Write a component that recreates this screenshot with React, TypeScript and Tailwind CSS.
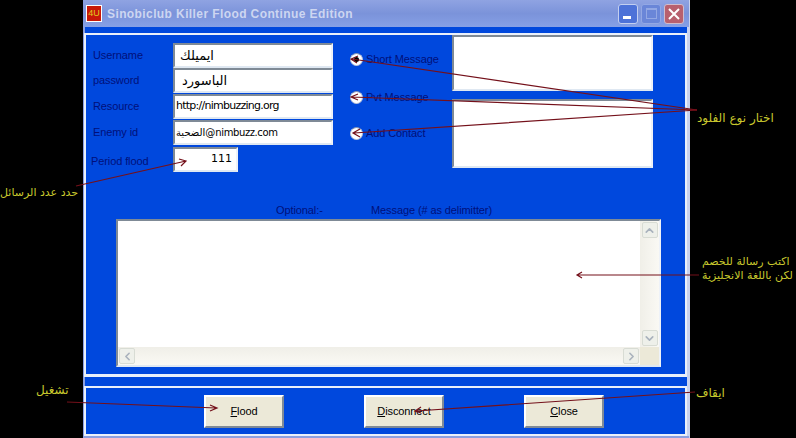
import { ChevronUp, ChevronDown, ChevronLeft, ChevronRight } from "lucide-react";

const sunken = "border-2 border-t-[#7f8a96] border-l-[#7f8a96] border-r-[#eef2f8] border-b-[#dfe8f2] bg-white";
const labelText = "text-[11px] leading-none tracking-[-0.1px] text-[#00107a]";

const Field = ({ label, value, size, className }: { label: string; value: string; size: string; className?: string }) => {
    return <div className={`flex items-center h-[25px] ${className ?? ""}`}>
        <span className={`w-[80px] ${labelText}`}>{label}</span>
        <div className={`w-[160px] h-[25px] flex items-center text-black ${sunken} ${size}`}>{value}</div>
    </div>
}

const Radio = ({ label, checked, className }: { label: string; checked?: boolean; className: string }) => {
    return <div className={`flex items-center ${className}`}>
        <span className="w-[13px] h-[13px] rounded-full bg-white border border-[#b8c2d8] border-t-[#8492b4] flex items-center justify-center">
            {checked && <span className="w-[5px] h-[5px] rounded-full bg-black"></span>}
        </span>
        <span className={`ml-[3px] ${labelText}`}>{label}</span>
    </div>
}

const ScrollButton = ({ children }: { children: React.ReactNode }) => {
    return <div className="w-[16px] h-[16px] bg-[#eef0ea] border border-[#d8dcd4] rounded-[2px] flex items-center justify-center text-[#a9b2bd]">
        {children}
    </div>
}

const ActionButton = ({ first, rest }: { first: string; rest: string }) => {
    return <button className="w-[80px] h-[33px] bg-[#ece9d8] border-2 border-t-white border-l-white border-r-[#7f8a96] border-b-[#7f8a96] text-[11px] tracking-[-0.1px] text-black">
        <span className="underline">{first}</span>{rest}
    </button>
}

const Callout = ({ text, className }: { text: string; className: string }) => {
    return <div dir="rtl" className={`absolute leading-[14px] text-[#c9c92e] whitespace-nowrap font-['DejaVu_Sans',sans-serif] ${className}`}>{text}</div>
}

const Arrows = () => {
    return <svg className="absolute inset-0 pointer-events-none" width="796" height="438" fill="none" stroke="#74101a" strokeWidth="1.2">
        <path d="M697 110 L352 59 M358 56 L351 59 L357 63" />
        <path d="M697 110 L352 97 M358 94 L351 97 L358 100" />
        <path d="M697 110 L354 133 M360 129 L353 133 L360 137" />
        <path d="M76 186 L186 161 M179 159 L186 161 L181 166" />
        <path d="M699 275 L578 275 M582 272 L577 275 L582 278" />
        <path d="M67 402 L216 408 M210 405 L217 408 L210 411" />
        <path d="M695 392 L416 411 M421 407 L415 411 L421 413" />
    </svg>
}

const App = () => {
    return <div className="relative w-[796px] h-[438px] bg-black overflow-hidden font-['Liberation_Sans',sans-serif]">
        <div className="ml-[83px] w-[607px] h-[438px] flex flex-col bg-[#0048dd] border-l-[2px] border-r-[3px] border-l-[#8c9fe0] border-r-[#c9d2ee]">
            <header className="h-[27px] shrink-0 -mx-[2px] flex items-center pl-[3px] pr-[5px] bg-gradient-to-b from-[#8fa3e2] via-[#7b93da] to-[#86a0e6]">
                <div className="w-[16px] h-[17px] border border-white bg-[#c81808] flex items-center justify-center text-[9px] leading-none text-[#e0cc20]">4U</div>
                <span className="ml-[5px] text-[12px] font-bold tracking-[0.4px] text-[#cdd6f1]">Sinobiclub Killer Flood Continue Edition</span>
                <div className="ml-auto flex gap-[3px]">
                    <div className="w-[20px] h-[20px] rounded-[3px] border border-[#c3cff0] bg-[#4d72d8] flex items-end pl-[4px] pb-[4px]">
                        <span className="w-[8px] h-[3px] bg-white"></span>
                    </div>
                    <div className="w-[20px] h-[20px] rounded-[3px] border border-[#93a8e4] bg-[#6a86d8] flex items-center justify-center">
                        <span className="w-[11px] h-[11px] border border-[#93a8e4] border-t-2"></span>
                    </div>
                    <div className="w-[20px] h-[20px] rounded-[3px] border border-[#d0bccc] bg-[#b8606e] flex items-center justify-center">
                        <svg width="12" height="12" viewBox="0 0 12 12" stroke="white" strokeWidth="2"><path d="M1 1 L11 11 M11 1 L1 11" /></svg>
                    </div>
                </div>
            </header>
            <div className="h-[6px] shrink-0"></div>
            <section className="h-[344px] shrink-0 -ml-px border-t-2 border-l-2 border-r-2 border-b-[3px] border-[#eaf0fa]">
                <div className="flex h-[137px] items-start">
                    <div className="ml-[7px] mt-[8px] w-[240px]">
                        <Field label="Username" value="ايميلك" size="text-[13px] pl-[5px] font-['DejaVu_Sans',sans-serif]" />
                        <Field label="password" value="الباسورد" size="text-[13px] pl-[7px] font-['DejaVu_Sans',sans-serif]" />
                        <Field label="Resource" value="http://nimbuzzing.org" size="text-[11px] pl-[1px] font-['DejaVu_Sans',sans-serif] tracking-[-0.75px]" className="mt-px" />
                        <Field label="Enemy id" value="الضحية@nimbuzz.com" size="text-[10px] pl-[1px] font-['DejaVu_Sans',sans-serif] tracking-[-0.4px]" className="mt-px" />
                        <div className="flex items-center mt-[2px] -ml-[2px]">
                            <span className={`w-[82px] mt-[4px] ${labelText}`}>Period flood</span>
                            <div className={`w-[65px] h-[25px] flex items-center justify-end pr-[4px] text-[11px] text-black font-['DejaVu_Sans',sans-serif] ${sunken}`}>111</div>
                        </div>
                    </div>
                    <div className="ml-[17px] w-[102px]">
                        <Radio label="Short Message" checked className="mt-[18px]" />
                        <Radio label="Pvt Message" className="mt-[25px]" />
                        <Radio label="Add Contact" className="mt-[23px]" />
                    </div>
                    <div>
                        <div className={`w-[201px] h-[56px] ${sunken}`}></div>
                        <div className={`w-[201px] h-[69px] mt-[8px] ${sunken}`}></div>
                    </div>
                </div>
                <div className="flex mt-[32px] h-[12px] items-center">
                    <span className={`ml-[190px] w-[95px] ${labelText}`}>Optional:-</span>
                    <span className={labelText}>Message (# as delimitter)</span>
                </div>
                <div className={`ml-[30px] mt-[3px] w-[545px] h-[148px] grid grid-cols-[1fr_19px] grid-rows-[1fr_18px] ${sunken}`}>
                    <div className="bg-white"></div>
                    <div className="bg-gradient-to-r from-[#f0efe8] to-[#faf9f4] flex flex-col justify-between items-center py-[1px]">
                        <ScrollButton><ChevronUp size={13} strokeWidth={3} /></ScrollButton>
                        <ScrollButton><ChevronDown size={13} strokeWidth={3} /></ScrollButton>
                    </div>
                    <div className="bg-gradient-to-b from-[#f0efe8] to-[#faf9f4] flex justify-between items-center px-[1px]">
                        <ScrollButton><ChevronLeft size={13} strokeWidth={3} /></ScrollButton>
                        <ScrollButton><ChevronRight size={13} strokeWidth={3} /></ScrollButton>
                    </div>
                    <div className="bg-[#ece9d8]"></div>
                </div>
            </section>
            <div className="h-[9px] shrink-0"></div>
            <section className="h-[50px] shrink-0 -ml-px border-t-2 border-l-2 border-r-2 border-b-2 border-[#eaf0fa] pl-[118px] pt-[7px] flex gap-[80px]">
                <ActionButton first="F" rest="lood" />
                <ActionButton first="D" rest="isconnect" />
                <ActionButton first="C" rest="lose" />
            </section>
            <div className="flex-1 -mx-[2px] bg-[#8c9fe0]"></div>
        </div>
        <Arrows />
        <Callout text="اختار نوع الفلود" className="text-[12px] left-[697px] top-[111px]" />
        <Callout text="حدد عدد الرسائل" className="text-[11px] left-0 top-[186px]" />
        <Callout text="اكتب رسالة للخصم" className="text-[11px] left-[702px] top-[255px]" />
        <Callout text="لكن باللغة الانجليزية" className="text-[11px] left-[702px] top-[269px]" />
        <Callout text="تشغيل" className="text-[12px] left-[36px] top-[383px]" />
        <Callout text="ايقاف" className="text-[12px] left-[696px] top-[386px]" />
    </div>
}

export default App;
